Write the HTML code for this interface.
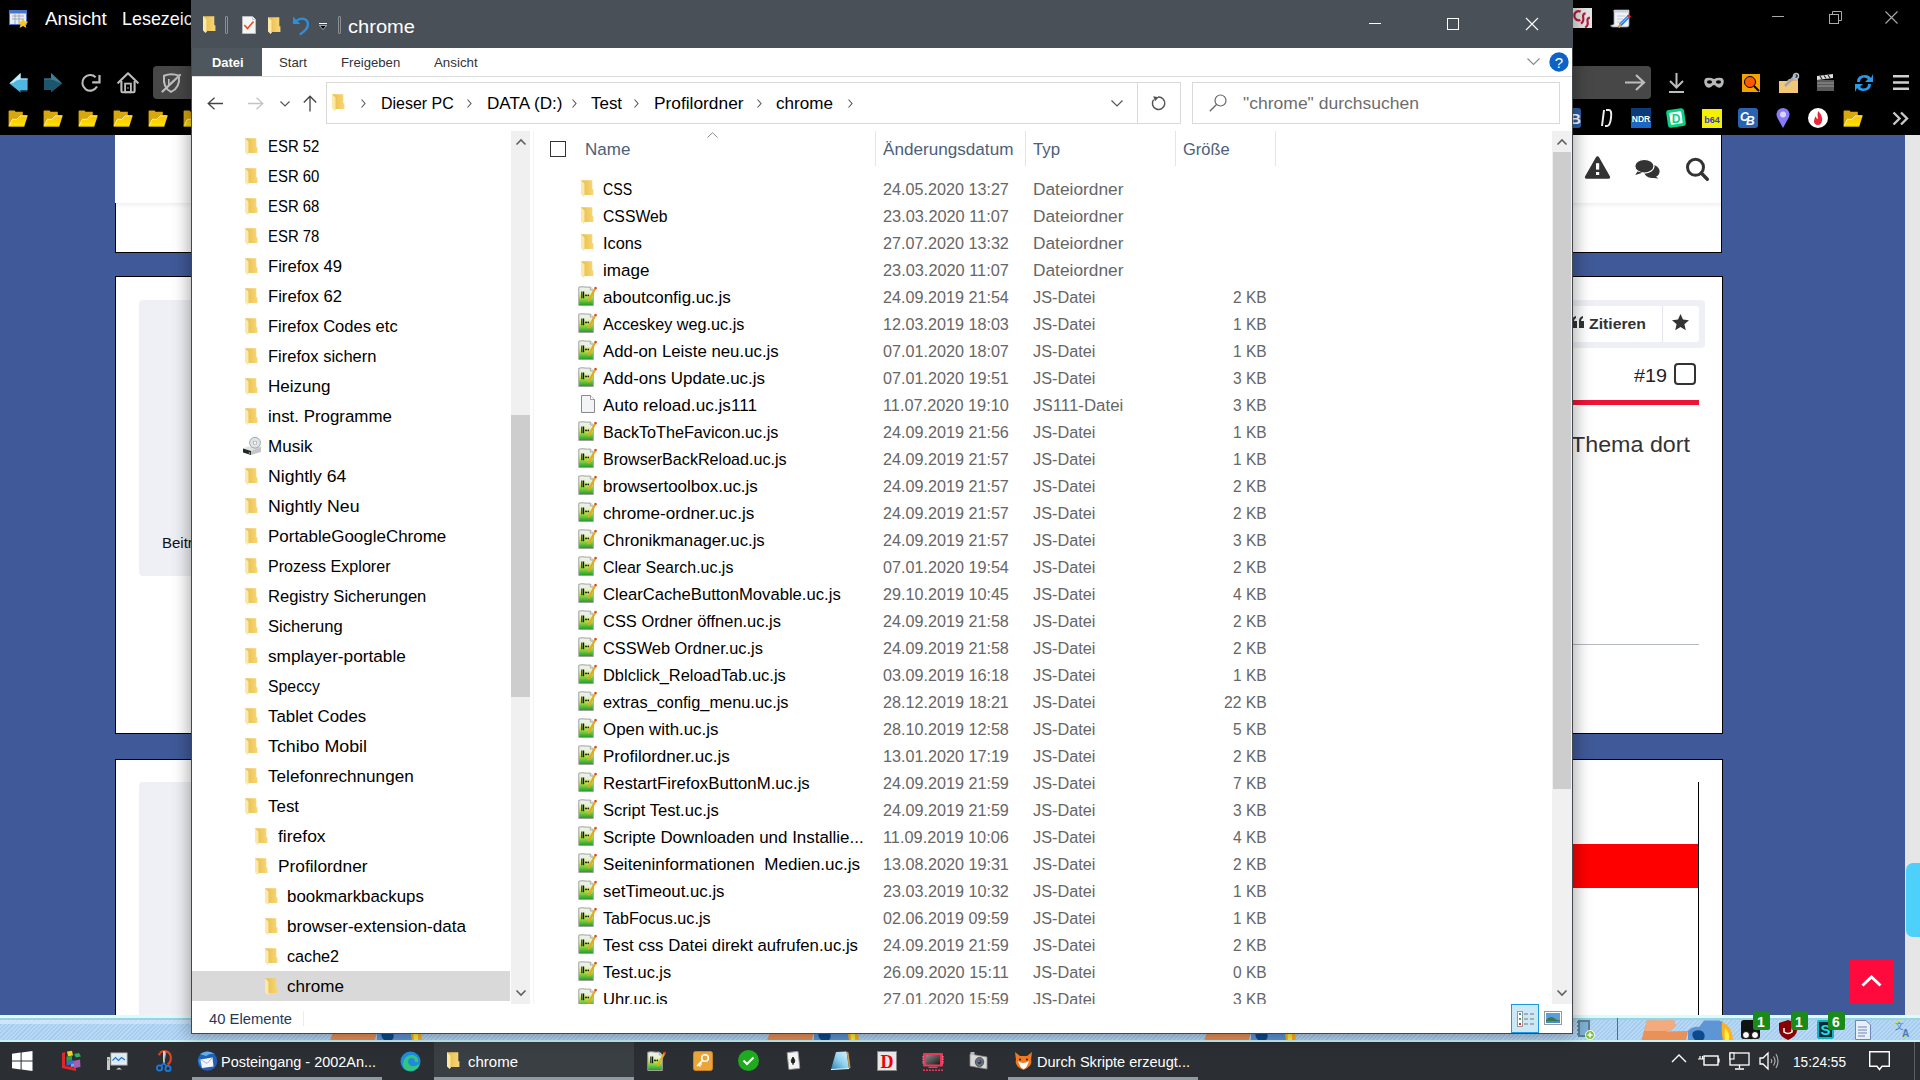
<!DOCTYPE html>
<html><head><meta charset="utf-8">
<style>
*{margin:0;padding:0;box-sizing:border-box}
html,body{width:1920px;height:1080px;overflow:hidden;background:#000;font-family:"Liberation Sans",sans-serif;position:relative}
.a{position:absolute}
.t{position:absolute;white-space:pre}
svg{overflow:visible}
</style></head><body>
<svg width="0" height="0" style="position:absolute">
<defs>
<linearGradient id="gfold" x1="0" y1="0" x2="1" y2="0"><stop offset="0" stop-color="#e9bd4c"/><stop offset="1" stop-color="#f8d775"/></linearGradient>
<linearGradient id="gjs" x1="0" y1="0" x2="0" y2="1"><stop offset="0" stop-color="#eef2f2"/><stop offset=".3" stop-color="#e6f2d0"/><stop offset=".5" stop-color="#c6ea50"/><stop offset=".75" stop-color="#6cc43a"/><stop offset="1" stop-color="#1b9a2a"/></linearGradient>
<linearGradient id="gbmf" x1="0" y1="0" x2="0" y2="1"><stop offset="0" stop-color="#f8c400"/><stop offset=".7" stop-color="#ffd800"/><stop offset="1" stop-color="#fff000"/></linearGradient>
<linearGradient id="gaddon" x1="0" y1="0" x2="0" y2="1"><stop offset="0" stop-color="#c9e2f5"/><stop offset="1" stop-color="#a9cdee"/></linearGradient>
<symbol id="fold" viewBox="0 0 13 17"><path d="M0.5 0.3H11.3V9.3H12.4V15H3.8V14H0.5Z" fill="url(#gfold)"/><path d="M0 0L3.8 3.4V15.2L2.6 17L0 14.6Z" fill="#fde9a6"/><path d="M0 0L3.8 3.4V15.2" fill="none" stroke="#e9c262" stroke-width=".6"/></symbol>
<symbol id="js" viewBox="0 0 19 20"><path d="M.8 1.2Q4 .4 7 1Q9.5 1.4 11.8 1H12.3L15.3 4V19.5H.8Z" fill="url(#gjs)" stroke="#a0a0a0" stroke-width="1"/><path d="M12.3 1V4H15.3" fill="#e8e8e8" stroke="#a0a0a0" stroke-width=".8"/><path d="M3.9 5.5V12.2M5.6 5.5V12.2" stroke="#151515" stroke-width="1.2"/><circle cx="8" cy="9.4" r=".95" fill="#151515"/><circle cx="10.3" cy="9.4" r=".85" fill="#151515"/><path d="M18 1.3L10.3 15.2" stroke="#e8a81c" stroke-width="2.1"/><path d="M18 1.3L17.1 2.9" stroke="#e03b3b" stroke-width="2.3"/></symbol>
<symbol id="blank" viewBox="0 0 14 18"><path d="M.5 .5H9.5L13.5 4.5V17.5H.5Z" fill="#f3f4f6" stroke="#8a8a8a" stroke-width="1"/><path d="M9.5 .5V4.5H13.5" fill="#fff" stroke="#8a8a8a" stroke-width=".8"/></symbol>
<symbol id="bmf" viewBox="0 0 20 17"><path d="M.6 1.2Q.6 .4 1.4 .4H6.5L7.6 1.8H14.8V5.5H11.5L8.8 9H3.8L.6 16.4Z" fill="#d9a60c"/><path d="M.6 16.4L3.8 9H8.8L11.5 5.5H19.8L16.2 16.4Z" fill="url(#gbmf)"/><path d="M1.2 15.6L4.2 9.3H9L11.8 5.8H19.2" fill="none" stroke="#fff8d0" stroke-width=".9"/><path d="M.8 16H16.3" stroke="#e8c000" stroke-width=".8"/></symbol>
<symbol id="chev" viewBox="0 0 10 6"><path d="M.5 .5L5 5L9.5 .5" fill="none" stroke="currentColor" stroke-width="1.2"/></symbol>
</defs></svg>

<div class="a" style="left:0px;top:135px;width:1905px;height:880px;background:#405998;"></div>
<div class="a" style="left:1905px;top:135px;width:15px;height:880px;background:#e6e6e6;"></div>
<div class="a" style="left:1906px;top:863px;width:14px;height:74px;background:#4dd0fa;border-radius:7px 0 0 7px"></div>
<div class="a" style="left:115px;top:134px;width:1607px;height:119px;background:#fff;border:1px solid #000"></div>
<div class="a" style="left:115px;top:276px;width:1608px;height:458px;background:#fff;border:1px solid #000"></div>
<div class="a" style="left:115px;top:759px;width:1608px;height:262px;background:#fff;border:1px solid #000"></div>
<div class="a" style="left:115px;top:135px;width:1606px;height:68px;background:#fff;"></div>
<div class="a" style="left:116px;top:203px;width:1605px;height:5px;background:linear-gradient(#f1f1f3,#fff);"></div>
<div class="a" style="left:139px;top:300px;width:60px;height:276px;background:#eef0f5;border-radius:4px"></div>
<div class="t " style="left:162px;top:535.30px;font-size:15px;line-height:15px;color:#111;">Beitr</div>
<div class="a" style="left:139px;top:782px;width:60px;height:240px;background:#eef0f5;border-radius:4px"></div>
<svg class="a" style="left:1584px;top:155px;" width="27" height="25" viewBox="0 0 27 25"><path d="M13.5 1.3Q14.6 1.3 15.2 2.4L26 21.6Q26.6 23.8 24.4 23.8H2.6Q.4 23.8 1 21.6L11.8 2.4Q12.4 1.3 13.5 1.3Z" fill="#333"/><rect x="12" y="8.2" width="3.2" height="6.4" fill="#fff"/><rect x="12" y="17" width="3.2" height="3" fill="#fff"/></svg>
<svg class="a" style="left:1634px;top:159px;" width="27" height="21" viewBox="0 0 27 21"><ellipse cx="17.8" cy="12.4" rx="7.8" ry="6.6" fill="#333"/><path d="M21 17L24.5 19.5L17 18.8Z" fill="#333"/><ellipse cx="10.4" cy="7.2" rx="9.6" ry="6.9" fill="#333" stroke="#fff" stroke-width="1.3"/><path d="M3.5 12.5L1.2 16L8.5 13.8Z" fill="#333"/></svg>
<svg class="a" style="left:1684px;top:156px;" width="27" height="27" viewBox="0 0 27 27"><circle cx="11.5" cy="11.3" r="8" fill="none" stroke="#333" stroke-width="3"/><path d="M17.2 17L23.3 23.2" stroke="#333" stroke-width="3.4" stroke-linecap="round"/></svg>
<div class="a" style="left:1572px;top:300px;width:133px;height:48px;background:#eef0f5;border-radius:4px"></div>
<div class="a" style="left:1572px;top:306px;width:127px;height:36px;background:#fff;border-radius:0 3px 3px 0"></div>
<div class="a" style="left:1662px;top:306px;width:1px;height:36px;background:#e4e6ec;"></div>
<svg class="a" style="left:1572px;top:316px;" width="13" height="12" viewBox="0 0 13 12"><path d="M0 5Q0 1 4 0V2Q2 3 2 5H5V12H0Z M7 5Q7 1 11 0V2Q9 3 9 5H12V12H7Z" fill="#333"/></svg>
<div class="t f" style="left:1589px;top:316.30px;font-size:15px;line-height:15px;color:#333;transform:scaleX(1.0519);transform-origin:0 0;font-weight:bold;">Zitieren</div>
<svg class="a" style="left:1672px;top:314px;" width="17" height="17" viewBox="0 0 17 17"><path d="M8.5 0L11 5.6L17 6.2L12.4 10.2L13.8 16.3L8.5 13.1L3.2 16.3L4.6 10.2L0 6.2L6 5.6Z" fill="#333"/></svg>
<div class="t f" style="left:1633.5px;top:366.76px;font-size:18px;line-height:18px;color:#222;transform:scaleX(1.0983);transform-origin:0 0;">#19</div>
<div class="a" style="left:1674px;top:363px;width:22px;height:22px;border:2px solid #333;border-radius:4px"></div>
<div class="a" style="left:1572px;top:400px;width:127px;height:5px;background:#ee1438;"></div>
<div class="t f" style="left:1571px;top:433.88px;font-size:22px;line-height:22px;color:#333;transform:scaleX(1.0578);transform-origin:0 0;">Thema dort</div>
<div class="a" style="left:1572px;top:644px;width:127px;height:1px;background:#b4b8c0;"></div>
<div class="a" style="left:1572px;top:844px;width:126px;height:44px;background:#ff0000;"></div>
<div class="a" style="left:1698px;top:782px;width:1px;height:240px;background:#000;"></div>
<div class="a" style="left:1849px;top:959px;width:45px;height:45px;background:#ff0a3c;"></div>
<svg class="a" style="left:1861px;top:975px;" width="21" height="12" viewBox="0 0 21 12"><path d="M1.5 10.5L10.5 2L19.5 10.5" fill="none" stroke="#fff" stroke-width="3"/></svg>
<div class="a" style="left:0px;top:1015px;width:1920px;height:3px;background:#dcfcfc;"></div>
<div class="a" style="left:0px;top:1018px;width:1920px;height:2px;background:#96d3e3;"></div>
<div class="a" style="left:0px;top:1020px;width:1920px;height:20px;background:repeating-linear-gradient(135deg,#a6ccf0 0 1.5px,#bad9f5 1.5px 3px);"></div>
<div class="a" style="left:0px;top:1020px;width:700px;height:4px;background:linear-gradient(90deg,rgba(230,240,255,.6),rgba(230,240,255,0));"></div>
<div class="a" style="left:0px;top:1040px;width:1920px;height:2px;background:#c9f2f5;"></div>
<svg class="a" style="left:330px;top:1020px;" width="94" height="20" viewBox="0 0 94 20"><path d="M6 .5H33L35 5.5L31 9.5L25 11.5L47 11L45 20H.5Z" fill="#ee8a48" opacity=".9"/><path d="M6 .5H33L35 5.5L31 9.5L25 11H3.5Z" fill="#f4ae82" opacity=".9"/><path d="M47 11Q52 6 58 7L63 .5H78L82 2L89 20H47Z" fill="#4f8ad0" opacity=".85"/><path d="M52 12Q56 9 61 11Q66 15 62 20H54Q50 16 52 12Z" fill="#0c4a8c"/><path d="M81 2Q91 6 92 20H82Q80 12 81 2Z" fill="#ffb020"/><path d="M84 8Q89 12 88 20H84Q83 14 84 8Z" fill="#fff040"/></svg>
<svg class="a" style="left:767px;top:1020px;" width="94" height="20" viewBox="0 0 94 20"><path d="M6 .5H33L35 5.5L31 9.5L25 11.5L47 11L45 20H.5Z" fill="#ee8a48" opacity=".9"/><path d="M6 .5H33L35 5.5L31 9.5L25 11H3.5Z" fill="#f4ae82" opacity=".9"/><path d="M47 11Q52 6 58 7L63 .5H78L82 2L89 20H47Z" fill="#4f8ad0" opacity=".85"/><path d="M52 12Q56 9 61 11Q66 15 62 20H54Q50 16 52 12Z" fill="#0c4a8c"/><path d="M81 2Q91 6 92 20H82Q80 12 81 2Z" fill="#ffb020"/><path d="M84 8Q89 12 88 20H84Q83 14 84 8Z" fill="#fff040"/></svg>
<svg class="a" style="left:1204px;top:1020px;" width="94" height="20" viewBox="0 0 94 20"><path d="M6 .5H33L35 5.5L31 9.5L25 11.5L47 11L45 20H.5Z" fill="#ee8a48" opacity=".9"/><path d="M6 .5H33L35 5.5L31 9.5L25 11H3.5Z" fill="#f4ae82" opacity=".9"/><path d="M47 11Q52 6 58 7L63 .5H78L82 2L89 20H47Z" fill="#4f8ad0" opacity=".85"/><path d="M52 12Q56 9 61 11Q66 15 62 20H54Q50 16 52 12Z" fill="#0c4a8c"/><path d="M81 2Q91 6 92 20H82Q80 12 81 2Z" fill="#ffb020"/><path d="M84 8Q89 12 88 20H84Q83 14 84 8Z" fill="#fff040"/></svg>
<svg class="a" style="left:1641px;top:1020px;" width="94" height="20" viewBox="0 0 94 20"><path d="M6 .5H33L35 5.5L31 9.5L25 11.5L47 11L45 20H.5Z" fill="#ee8a48" opacity=".9"/><path d="M6 .5H33L35 5.5L31 9.5L25 11H3.5Z" fill="#f4ae82" opacity=".9"/><path d="M47 11Q52 6 58 7L63 .5H78L82 2L89 20H47Z" fill="#4f8ad0" opacity=".85"/><path d="M52 12Q56 9 61 11Q66 15 62 20H54Q50 16 52 12Z" fill="#0c4a8c"/><path d="M81 2Q91 6 92 20H82Q80 12 81 2Z" fill="#ffb020"/><path d="M84 8Q89 12 88 20H84Q83 14 84 8Z" fill="#fff040"/></svg>
<svg class="a" style="left:1577px;top:1020px;" width="20" height="20" viewBox="0 0 20 20"><rect x="1" y="0" width="12" height="17" fill="#5f7f8f"/><rect x="3" y="2" width="8" height="13" fill="#7fb3d9"/><path d="M1 2H0M1 6H0M1 10H0M1 14H0" stroke="#333"/><circle cx="13" cy="15" r="4.5" fill="#7ac142" stroke="#fff"/><path d="M13 12.5V17.5M10.5 15H15.5" stroke="#fff" stroke-width="1.6"/></svg>
<div class="a" style="left:1617px;top:1018px;width:1px;height:22px;background:#5a6a7a;"></div>
<svg class="a" style="left:1741px;top:1020px;" width="20" height="20" viewBox="0 0 20 20"><rect x="0" y="0" width="19" height="19" rx="3" fill="#111"/><circle cx="5" cy="15" r="3.5" fill="#fff" stroke="#111"/><circle cx="14" cy="15" r="3.5" fill="#fff" stroke="#111"/></svg>
<svg class="a" style="left:1779px;top:1020px;" width="18" height="20" viewBox="0 0 18 20"><path d="M9 0L18 3V10Q18 16 9 20Q0 16 0 10V3Z" fill="#800"/><path d="M5 8V12Q9 15 13 12V8" fill="none" stroke="#fff" stroke-width="1.5"/></svg>
<svg class="a" style="left:1817px;top:1020px;" width="18" height="20" viewBox="0 0 18 20"><rect x="0" y="0" width="17" height="19" rx="2" fill="#10b3c7"/><rect x="2" y="2" width="13" height="15" fill="#0b2b33"/><text x="8.5" y="15" font-family="Liberation Sans" font-weight="bold" font-size="15" fill="#1de0f0" text-anchor="middle">S</text></svg>
<div class="a" style="left:1753px;top:1012px;width:17px;height:18px;background:#1a8a1a;border-radius:2px"></div>
<div class="t " style="left:1757px;top:1015.15px;font-size:14px;line-height:14px;color:#fff;font-weight:bold;">1</div>
<div class="a" style="left:1791px;top:1012px;width:17px;height:18px;background:#1a8a1a;border-radius:2px"></div>
<div class="t " style="left:1795px;top:1015.15px;font-size:14px;line-height:14px;color:#fff;font-weight:bold;">1</div>
<div class="a" style="left:1828px;top:1012px;width:17px;height:18px;background:#1a8a1a;border-radius:2px"></div>
<div class="t " style="left:1832px;top:1015.15px;font-size:14px;line-height:14px;color:#fff;font-weight:bold;">6</div>
<svg class="a" style="left:1855px;top:1020px;" width="16" height="20" viewBox="0 0 16 20"><path d="M.5 .5H11L15.5 5V19.5H.5Z" fill="#e8eef8" stroke="#6c86b8"/><path d="M3 7H12M3 10H12M3 13H12M3 16H10" stroke="#6c86b8"/></svg>
<svg class="a" style="left:1892px;top:1020px;" width="18" height="18" viewBox="0 0 18 18"><path d="M3 6Q3 1 9 1M15 12Q15 17 9 17" fill="none" stroke="#d8e84a" stroke-width="1.6"/><text x="3" y="9" font-size="9" fill="#4a7abd" font-family="Liberation Sans">文</text><text x="10" y="17" font-size="10" fill="#4a7abd" font-family="Liberation Sans" font-weight="bold">A</text></svg>
<div class="a" style="left:0px;top:1042px;width:1920px;height:38px;background:#2b2f33;"></div>
<div class="a" style="left:434px;top:1042px;width:200px;height:38px;background:#3a3f44;"></div>
<div class="a" style="left:192px;top:1077px;width:190px;height:3px;background:#8f9aa3;"></div>
<div class="a" style="left:434px;top:1077px;width:200px;height:3px;background:#8f9aa3;"></div>
<div class="a" style="left:1008px;top:1077px;width:190px;height:3px;background:#8f9aa3;"></div>
<svg class="a" style="left:12px;top:1051px;" width="21" height="20" viewBox="0 0 21 20"><path d="M0 2.8L8.6 1.6V9.5H0ZM9.6 1.5L20.5 0V9.5H9.6ZM0 10.5H8.6V18.4L0 17.2ZM9.6 10.5H20.5V20L9.6 18.5Z" fill="#fff"/></svg>
<svg class="a" style="left:61px;top:1050px;" width="21" height="21" viewBox="0 0 21 21"><path d="M1 3L4 2V16L15 18V21L1 18Z" fill="#e02828"/><path d="M4 16L15 18L17 16.5L5 14.5Z" fill="#b01818"/><path d="M6 1.5L11 .8L12 5.5L7 6.2Z" fill="#f2d020"/><path d="M5.5 6.5L11 5.8V10.5L5.5 11Z" fill="#2ea040"/><path d="M5.5 11L12 10.2L12.5 14.5L5.5 15Z" fill="#3a6ae0"/><path d="M12 11L19 9.5L19.5 17L13 18Z" fill="#a060b0"/><path d="M13 4L18 3L20 6.5L15 7.5Z" fill="#30b060"/><path d="M10 14L13 13.5V16.5L10 17Z" fill="#60b0e0"/></svg>
<svg class="a" style="left:106px;top:1052px;" width="22" height="19" viewBox="0 0 22 19"><rect x="1" y="5" width="3" height="13" fill="#c8c8c8"/><rect x="1.5" y="7" width="1.5" height="1.5" fill="#3c3"/><rect x="5" y="1" width="16" height="12" fill="#f2f4f6" stroke="#b8b8b8"/><rect x="6.5" y="2.5" width="13" height="9" fill="#d6ecf8"/><path d="M6.5 8.5L9.5 5.5L12.5 8.5L15.5 5.5L19 8" fill="none" stroke="#2a6ad0" stroke-width="1.1"/><path d="M13 13V15.5L10 17.5H16L13 15.5" fill="#d0d0d0"/></svg>
<svg class="a" style="left:155px;top:1050px;" width="18" height="22" viewBox="0 0 18 22"><path d="M5 2.5Q9 0 13 2Q17 5 15.5 11Q14.5 13.5 12.5 14.5" fill="none" stroke="#e0401c" stroke-width="2.2"/><path d="M2.5 4L6.5 1.5L5 6Z" fill="#e0401c"/><path d="M8 1L10 1V13L9 15L8 13Z" fill="#d0d0d0"/><path d="M9 12L11 1.5" stroke="#aaa" stroke-width="1"/><circle cx="4.5" cy="18" r="2.6" fill="none" stroke="#1a7ae0" stroke-width="1.8"/><circle cx="13" cy="18.5" r="2.6" fill="none" stroke="#1a7ae0" stroke-width="1.8"/><path d="M6 16L9 13L11.5 16.5" stroke="#1a7ae0" stroke-width="1.5" fill="none"/></svg>
<svg class="a" style="left:196px;top:1050px;" width="22" height="22" viewBox="0 0 22 22"><circle cx="11.5" cy="11" r="9.8" fill="#1f5fb8"/><path d="M4 4Q11 -1 19 4Q14 3 10 6Z" fill="#5fb0f0"/><path d="M2.5 8Q2 15 8 19L6 12Z" fill="#3a90e0"/><path d="M4.5 9.5L16.5 7.5L17.5 16.5L6 18Z" fill="#f4f6fa"/><path d="M4.5 9.5L11 13.5L16.5 7.5" fill="none" stroke="#9ab0c8" stroke-width=".9"/></svg>
<div class="t f" style="left:221px;top:1055.40px;font-size:14.88px;line-height:14.88px;color:#fff;transform:scaleX(0.9711);transform-origin:0 0;">Posteingang - 2002An...</div>
<svg class="a" style="left:400px;top:1051px;" width="21" height="21" viewBox="0 0 21 21"><circle cx="10.5" cy="10.5" r="10" fill="#1d8ddb"/><path d="M3 12Q5 3 13 4Q19 6 18 11H8Q9 16 15 15Q19 14 20 12Q18 20 10 20Q2 19 3 12Z" fill="#33c481"/><path d="M8 11Q8 7 12 7Q15 7 15 11Z" fill="#1d8ddb"/></svg>
<svg class="a" style="left:447px;top:1052px;" width="13" height="17"><use href="#fold"/></svg>
<div class="t f" style="left:468px;top:1055.40px;font-size:14.88px;line-height:14.88px;color:#fff;transform:scaleX(1.0079);transform-origin:0 0;">chrome</div>
<svg class="a" style="left:647px;top:1051px;" width="19" height="20"><use href="#js"/></svg>
<svg class="a" style="left:693px;top:1051px;" width="20" height="20" viewBox="0 0 20 20"><rect x=".5" y=".5" width="19" height="19" rx="2" fill="#e9a53a" stroke="#c8822a"/><circle cx="12" cy="7" r="3.3" fill="none" stroke="#fff" stroke-width="1.6"/><path d="M9.8 9.2L4 15M5.5 13.5L7.5 15.5M7 12L8.6 13.6" stroke="#fff" stroke-width="1.6"/></svg>
<svg class="a" style="left:738px;top:1050px;" width="21" height="21" viewBox="0 0 21 21"><circle cx="10.5" cy="10.5" r="10.5" fill="#1faa1f"/><path d="M5.5 10.5L9 14L15.5 7.5" fill="none" stroke="#fff" stroke-width="2"/></svg>
<svg class="a" style="left:786px;top:1051px;" width="15" height="20" viewBox="0 0 15 20"><rect x="2" y="1" width="11" height="17" rx="1" fill="#f4f4f4" stroke="#999" transform="rotate(-6 7 10)"/><path d="M7 6Q4 10 6 12H8Q10 10 7 6Z M7 11V14" stroke="#222" fill="#222"/></svg>
<svg class="a" style="left:830px;top:1051px;" width="21" height="20" viewBox="0 0 21 20"><defs><linearGradient id="gnp" x1="0" y1="1" x2="1" y2="0"><stop offset="0" stop-color="#2f7fae"/><stop offset=".5" stop-color="#8fd0ee"/><stop offset="1" stop-color="#e2f6fc"/></linearGradient></defs><path d="M6 1L16.5 .5L19 17.5L1 18.5Z" fill="url(#gnp)"/><path d="M16.5 .5L18.5 1.5L20.5 17L19 17.5Z" fill="#c09a58"/><path d="M1 18.5L19 17.5" stroke="#dff" stroke-width="1"/></svg>
<svg class="a" style="left:877px;top:1051px;" width="20" height="20" viewBox="0 0 20 20"><rect x=".5" y=".5" width="19" height="19" fill="#e8e8e8" stroke="#888"/><text x="10" y="17" text-anchor="middle" font-family="Liberation Serif" font-weight="bold" font-size="18" fill="#e00">D</text></svg>
<svg class="a" style="left:922px;top:1052px;" width="22" height="20" viewBox="0 0 22 20"><defs><linearGradient id="gmon" x1="0" y1="0" x2="1" y2="1"><stop offset="0" stop-color="#8a8a8a"/><stop offset="1" stop-color="#1a1a1a"/></linearGradient></defs><rect x="1" y="1" width="20" height="13.5" rx="1" fill="#e8385c"/><rect x="4" y="3" width="14" height="9.5" fill="url(#gmon)"/><path d="M1 4V12M21 4V12" stroke="#ff8aa0" stroke-width="1" stroke-dasharray="1.5 1"/><path d="M7 14.5H15L16 16H6Z" fill="#e8385c"/><path d="M1 18.2H21" stroke="#e8385c" stroke-width="1.6" stroke-dasharray="2 1"/></svg>
<svg class="a" style="left:969px;top:1051px;" width="20" height="20" viewBox="0 0 20 20"><path d="M1 3L18 6V18L1 15Z" fill="#d8d8d8" stroke="#8a8a8a" stroke-width=".8"/><rect x="1.5" y="1" width="4" height="3" fill="#bbb"/><ellipse cx="10.5" cy="11" rx="4.2" ry="4.6" fill="#6a7078" stroke="#444" stroke-width=".8"/><circle cx="10.5" cy="11" r="2" fill="#2a3a5a"/><circle cx="10" cy="10.3" r=".7" fill="#9cf"/></svg>
<svg class="a" style="left:1013px;top:1050px;" width="21" height="21" viewBox="0 0 21 21"><path d="M2 2L7 6H14L19 2L18 10Q20 16 10.5 20Q1 16 3 10Z" fill="#f07820"/><path d="M5 11Q10 15 16 11Q14 18 10.5 19Q7 18 5 11Z" fill="#fff"/><circle cx="7" cy="9.5" r="1" fill="#222"/><circle cx="14" cy="9.5" r="1" fill="#222"/></svg>
<div class="t f" style="left:1037px;top:1055.40px;font-size:14.88px;line-height:14.88px;color:#fff;transform:scaleX(0.9791);transform-origin:0 0;">Durch Skripte erzeugt...</div>
<svg class="a" style="left:1671px;top:1054px;" width="16" height="9" viewBox="0 0 16 9"><path d="M1 8L8 1L15 8" fill="none" stroke="#fff" stroke-width="1.4"/></svg>
<svg class="a" style="left:1698px;top:1053px;" width="22" height="14" viewBox="0 0 22 14"><rect x="6" y="3" width="14" height="9" fill="none" stroke="#fff" stroke-width="1.4"/><rect x="20" y="5.5" width="1.6" height="4" fill="#fff"/><path d="M0 6H6M2 3V6M4.5 3V6" stroke="#fff" stroke-width="1.2"/></svg>
<svg class="a" style="left:1729px;top:1052px;" width="21" height="18" viewBox="0 0 21 18"><rect x="1" y="1" width="19" height="12" fill="none" stroke="#fff" stroke-width="1.3"/><path d="M10.5 13V16M6 17H15" stroke="#fff" stroke-width="1.3"/><rect x="1" y="1" width="4" height="6" fill="#2b2f33" stroke="#fff" stroke-width="1.1"/></svg>
<svg class="a" style="left:1759px;top:1052px;" width="20" height="18" viewBox="0 0 20 18"><path d="M1 6H4L9 1V17L4 12H1Z" fill="none" stroke="#fff" stroke-width="1.3"/><path d="M12 7Q13.5 9 12 11M14.5 4.5Q17.5 9 14.5 13.5M17 2Q21 9 17 16" fill="none" stroke="#aaa" stroke-width="1.2"/></svg>
<div class="t f" style="left:1793px;top:1054.90px;font-size:14.88px;line-height:14.88px;color:#fff;transform:scaleX(0.9153);transform-origin:0 0;">15:24:55</div>
<svg class="a" style="left:1869px;top:1051px;" width="21" height="20" viewBox="0 0 21 20"><path d="M.7 .7H20.3V15.3H13L10.5 18.5L8 15.3H.7Z" fill="none" stroke="#fff" stroke-width="1.4"/></svg>
<div class="a" style="left:1914px;top:1042px;width:1px;height:38px;background:#5a5f64;"></div>
<svg class="a" style="left:9px;top:10px;" width="20" height="18" viewBox="0 0 20 18"><rect x=".5" y=".5" width="17" height="14" fill="#e8eef8" stroke="#4a72c8"/><rect x=".5" y=".5" width="17" height="3" fill="#4a72c8"/><path d="M3 6H15M3 9H15M6 4V14M10 4V14" stroke="#9ab"/><path d="M14 8L15.6 11.5L19.4 11.8L16.5 14.2L17.4 18L14 16L10.6 18L11.5 14.2L8.6 11.8L12.4 11.5Z" fill="#f6c62c"/></svg>
<div class="t f" style="left:45px;top:9.56px;font-size:18.24px;line-height:18.24px;color:#fff;transform:scaleX(1.0344);transform-origin:0 0;">Ansicht</div>
<div class="t f" style="left:122px;top:9.56px;font-size:18.24px;line-height:18.24px;color:#fff;transform:scaleX(0.9827);transform-origin:0 0;">Lesezeichen</div>
<svg class="a" style="left:9px;top:73px;" width="20" height="20" viewBox="0 0 20 20"><path d="M11.6 0L.4 10.5L11.6 19.6V17H18.6V5.4H11.6Z" fill="#4fb6e2"/><path d="M11.6 0L.4 10.5L4 10Q8 6 11.6 6.5H18.6V5.4H11.6Z" fill="#c4eefc"/><path d="M11.6 17V19.6L12.5 18.6H18.6V17Z" fill="#234a5a"/></svg>
<svg class="a" style="left:44px;top:73px;" width="19" height="20" viewBox="0 0 19 20"><path d="M7 0L18.2 10.5L7 19.6V17H0V5.4H7Z" fill="#1b566c"/><path d="M7 0L18.2 10.5L14 9Q10 6.5 7 6.5H0V5.4H7Z" fill="#3f7f94"/></svg>
<svg class="a" style="left:81px;top:74px;" width="20" height="19" viewBox="0 0 20 19"><path d="M16 12.6A7.8 7.8 0 1 1 14.6 3.2" fill="none" stroke="#bdbdbd" stroke-width="2.1"/><path d="M11.2 8.4H18.5V1" fill="none" stroke="#bdbdbd" stroke-width="2.2"/></svg>
<svg class="a" style="left:117px;top:72px;" width="22" height="22" viewBox="0 0 22 22"><path d="M1.2 10.8L11 1.3L20.8 10.8" fill="none" stroke="#bdbdbd" stroke-width="2.1" stroke-linejoin="round" stroke-linecap="round"/><path d="M4.4 9V19Q4.4 20.2 5.6 20.2H16.4Q17.6 20.2 17.6 19V9" fill="none" stroke="#bdbdbd" stroke-width="2.1"/><rect x="8.1" y="11.6" width="5.8" height="8.6" fill="none" stroke="#bdbdbd" stroke-width="1.8"/><circle cx="11" cy="16" r=".8" fill="#bdbdbd"/></svg>
<div class="a" style="left:153px;top:66px;width:60px;height:33px;background:#474747;border-radius:4px"></div>
<svg class="a" style="left:161px;top:73px;" width="21" height="21" viewBox="0 0 21 21"><path d="M3 2.8Q10.5 -.2 18 2.8Q19.2 15 10 18.8Q1.8 15 3 2.8Z" fill="none" stroke="#bdbdbd" stroke-width="2"/><path d="M7.8 6V12.5L12.5 7.8" fill="none" stroke="#bdbdbd" stroke-width="1.6"/><path d="M1.5 18.5L19 2" stroke="#bdbdbd" stroke-width="2.3" stroke-linecap="round"/></svg>
<svg class="a" style="left:8px;top:110px;" width="20" height="17"><use href="#bmf"/></svg>
<svg class="a" style="left:43px;top:110px;" width="20" height="17"><use href="#bmf"/></svg>
<svg class="a" style="left:78px;top:110px;" width="20" height="17"><use href="#bmf"/></svg>
<svg class="a" style="left:113px;top:110px;" width="20" height="17"><use href="#bmf"/></svg>
<svg class="a" style="left:148px;top:110px;" width="20" height="17"><use href="#bmf"/></svg>
<svg class="a" style="left:183px;top:110px;" width="20" height="17"><use href="#bmf"/></svg>
<svg class="a" style="left:1573px;top:8px;" width="19" height="20" viewBox="0 0 19 20"><rect x="0" y="0" width="19" height="20" fill="#e6e6e6"/><path d="M7.6 3.6A4.4 4.6 0 1 0 7.4 12" fill="none" stroke="#b51d3c" stroke-width="2.3"/><path d="M12.6 5.4Q9.4 5.8 10.2 9.6Q11 13.6 8 15.6" fill="none" stroke="#b51d3c" stroke-width="2.2"/><path d="M16.9 9.6Q13.8 10 14.6 13.8Q15.4 17.6 12.2 19.6" fill="none" stroke="#b51d3c" stroke-width="2.2"/></svg>
<svg class="a" style="left:1610px;top:8px;" width="20" height="20" viewBox="0 0 20 20"><path d="M4 2H19V17Q19 19 17 19H3Q1 19 .6 17.6L4 16.5Z" fill="#eef1f5" stroke="#8d98a6" stroke-width=".8"/><path d="M4 2Q2.8 3.6 4.6 4.6H19V2Z" fill="#c9d1da"/><path d="M7 8H15M7 11H13M7 14H12" stroke="#c2cad2"/><path d="M19 8.2L10.2 17" stroke="#2a7ae0" stroke-width="3.2"/><path d="M18.3 8.6L10.2 16.6" stroke="#9cd4ff" stroke-width=".9"/><path d="M19.8 7.4L18.2 9" stroke="#e83030" stroke-width="3.4"/><path d="M10.6 16.6L8.6 19.2" stroke="#d4a23c" stroke-width="2.4"/></svg>
<div class="a" style="left:1772px;top:16px;width:12px;height:1px;background:#aaa;"></div>
<svg class="a" style="left:1829px;top:11px;" width="13" height="13" viewBox="0 0 13 13"><rect x=".5" y="3.5" width="9" height="9" fill="none" stroke="#aaa"/><path d="M3.5 3.5V.5H12.5V9.5H9.5" fill="none" stroke="#aaa"/></svg>
<svg class="a" style="left:1885px;top:11px;" width="13" height="13" viewBox="0 0 13 13"><path d="M.5 .5L12.5 12.5M12.5 .5L.5 12.5" stroke="#aaa" stroke-width="1.1"/></svg>
<div class="a" style="left:1560px;top:66px;width:91px;height:33px;background:#474747;border-radius:4px"></div>
<svg class="a" style="left:1625px;top:74px;" width="21" height="17" viewBox="0 0 21 17"><path d="M0 8.5H19M11 1L19 8.5L11 16" fill="none" stroke="#bdbdbd" stroke-width="2.2"/></svg>
<svg class="a" style="left:1668px;top:73px;" width="17" height="20" viewBox="0 0 17 20"><path d="M8.5 0V14M2 8L8.5 14.5L15 8" fill="none" stroke="#bdbdbd" stroke-width="2"/><path d="M1 19H16" stroke="#bdbdbd" stroke-width="2"/></svg>
<svg class="a" style="left:1704px;top:77px;" width="20" height="12" viewBox="0 0 20 12"><path d="M10 2Q14 0 18 1Q21 3 19 8Q17 12 13 10Q11 8 10 8Q9 8 7 10Q3 12 1 8Q-1 3 2 1Q6 0 10 2Z" fill="#b8b8b8"/><ellipse cx="5.5" cy="5" rx="2.6" ry="1.8" fill="#000"/><ellipse cx="14.5" cy="5" rx="2.6" ry="1.8" fill="#000"/></svg>
<svg class="a" style="left:1742px;top:74px;" width="18" height="18" viewBox="0 0 18 18"><rect x="0" y="0" width="18" height="18" fill="#f5a300"/><circle cx="8" cy="8" r="5.5" fill="#ff5a00" stroke="#000" stroke-width="1"/><path d="M12 12L17 17" stroke="#000" stroke-width="2"/></svg>
<svg class="a" style="left:1779px;top:73px;" width="20" height="20" viewBox="0 0 20 20"><rect x="0" y="8" width="19" height="12" fill="#f0c878"/><path d="M0 8H8L10 6H19V8" fill="#e0b060"/><path d="M6 13L17 2" stroke="#9aa8b8" stroke-width="2.5"/><circle cx="17" cy="3" r="2.5" fill="none" stroke="#b8c4d0" stroke-width="1.5"/></svg>
<svg class="a" style="left:1816px;top:74px;" width="19" height="17" viewBox="0 0 19 17"><rect x="1" y="6" width="17" height="11" fill="#5a5a5a"/><path d="M1 2L17 0V4L1 6Z" fill="#ddd"/><path d="M4 2L6 5M8 1.5L10 4.5M12 1L14 4" stroke="#333" stroke-width="1.3"/><path d="M1 9H18M1 12H18" stroke="#999"/></svg>
<svg class="a" style="left:1854px;top:73px;" width="20" height="20" viewBox="0 0 20 20"><path d="M3 9Q3 2 11 2Q15 2 17 5L19 1V9H11L14 6Q12 4.5 10 4.5Q6 5 6 9Z" fill="#2a9ae8"/><path d="M17 11Q17 18 9 18Q5 18 3 15L1 19V11H9L6 14Q8 15.5 10 15.5Q14 15 14 11Z" fill="#2a9ae8"/></svg>
<svg class="a" style="left:1893px;top:75px;" width="16" height="15" viewBox="0 0 16 15"><path d="M0 1.3H16M0 7.5H16M0 13.7H16" stroke="#d0d0d0" stroke-width="2.4"/></svg>
<svg class="a" style="left:1572px;top:108px;" width="10" height="20" viewBox="0 0 10 20"><rect x="-8" y="0" width="17" height="20" rx="3" fill="#2b5fa8"/><text x="-2" y="16" font-family="Liberation Sans" font-weight="bold" font-size="15" fill="#fff">B</text></svg>
<svg class="a" style="left:1601px;top:109px;" width="11" height="18" viewBox="0 0 11 18"><path d="M3 1L1 17M5 1H8Q11 1 10 9Q9 17 6 17H4" fill="none" stroke="#eee" stroke-width="2"/></svg>
<svg class="a" style="left:1631px;top:108px;" width="20" height="20" viewBox="0 0 20 20"><rect width="20" height="20" fill="#0c3b7c"/><rect y="13" width="20" height="7" fill="#1c66c4"/><text x="10" y="13.5" text-anchor="middle" font-family="Liberation Sans" font-weight="bold" font-size="8.5" fill="#fff">NDR</text></svg>
<svg class="a" style="left:1666px;top:108px;" width="20" height="20" viewBox="0 0 20 20"><rect x="1" y="1" width="18" height="18" rx="3" fill="#0bd184" transform="rotate(-8 10 10)"/><rect x="4" y="4" width="12" height="12" rx="1" fill="#fff" transform="rotate(-8 10 10)"/><text x="10" y="15" text-anchor="middle" font-family="Liberation Sans" font-weight="bold" font-size="12" fill="#0bd184">D</text></svg>
<svg class="a" style="left:1702px;top:109px;" width="20" height="19" viewBox="0 0 20 19"><rect width="20" height="19" fill="#f4f000"/><text x="10" y="13.5" text-anchor="middle" font-family="Liberation Sans" font-weight="bold" font-size="9" fill="#3a3ad0">b64</text></svg>
<svg class="a" style="left:1738px;top:108px;" width="20" height="20" viewBox="0 0 20 20"><rect width="20" height="20" rx="3" fill="#2a62b0"/><text x="2" y="13" font-family="Liberation Sans" font-weight="bold" font-style="italic" font-size="12" fill="#fff">C</text><text x="8" y="17" font-family="Liberation Sans" font-weight="bold" font-style="italic" font-size="12" fill="#fff">B</text></svg>
<svg class="a" style="left:1776px;top:108px;" width="14" height="20" viewBox="0 0 14 20"><path d="M7 20L1.5 10A6.5 6.5 0 1 1 12.5 10Z" fill="#8a7aff"/><circle cx="7" cy="6.5" r="3" fill="#dcd6ff"/></svg>
<svg class="a" style="left:1808px;top:108px;" width="20" height="20" viewBox="0 0 20 20"><circle cx="10" cy="10" r="10" fill="#fff"/><path d="M10 3Q15 8 14 13Q13 17 10 17Q6 17 6 13Q6 10 8 8Q8 11 10 11Q9 7 10 3Z" fill="#e8283a"/></svg>
<svg class="a" style="left:1843px;top:110px;" width="20" height="17"><use href="#bmf"/></svg>
<svg class="a" style="left:1892px;top:111px;" width="17" height="15" viewBox="0 0 17 15"><path d="M1.5 1.5L7.5 7.5L1.5 13.5M9 1.5L15 7.5L9 13.5" fill="none" stroke="#c8c8c8" stroke-width="2.4"/></svg>
<div class="a" style="left:191px;top:0;width:1382px;height:1034px;background:#fff;border:1px solid #42484e;box-shadow:0 0 16px 2px rgba(0,0,0,.35)"></div>
<div class="a" style="left:191px;top:0px;width:1382px;height:48px;background:#4a5057;"></div>
<svg class="a" style="left:203px;top:16px;" width="13" height="17"><use href="#fold"/></svg>
<div class="a" style="left:225px;top:16px;width:3px;height:18px;border:1px solid #8a8f95;border-radius:1px"></div>
<svg class="a" style="left:242px;top:16px;" width="14" height="18" viewBox="0 0 14 18"><path d="M.5 .5H10.5L13.5 3.5V17.5H.5Z" fill="#f4f5f7" stroke="#b8bcc0"/><path d="M10.5 .5V3.5H13.5" fill="#fff" stroke="#b8bcc0" stroke-width=".8"/><path d="M2.3 9L5.5 12.5L11.5 5.5" fill="none" stroke="#f04a10" stroke-width="1.6"/></svg>
<svg class="a" style="left:268px;top:17px;" width="13" height="17"><use href="#fold"/></svg>
<svg class="a" style="left:293px;top:16px;" width="16" height="19" viewBox="0 0 16 19"><path d="M0 .6V7.9H7.4Z" fill="#2d8fdc"/><path d="M2.8 5.3Q7.5 1.2 12 3.2Q16 5.5 14.6 10.5Q13.2 14.5 6.8 18.4" fill="none" stroke="#2d8fdc" stroke-width="2.3"/></svg>
<svg class="a" style="left:319px;top:23px;" width="8" height="8" viewBox="0 0 8 8"><path d="M0 .5H8" stroke="#fff" stroke-width="1"/><path d="M.5 2.5H7.5L4 6.5Z" fill="#000" stroke="#fff" stroke-width=".6"/></svg>
<div class="a" style="left:338px;top:16px;width:3px;height:18px;border:1px solid #8a8f95;border-radius:1px"></div>
<div class="t f" style="left:348px;top:16.75px;font-size:19.2px;line-height:19.2px;color:#fff;transform:scaleX(1.0459);transform-origin:0 0;">chrome</div>
<div class="a" style="left:1369px;top:23px;width:12px;height:1px;background:#fff;"></div>
<div class="a" style="left:1447px;top:18px;width:12px;height:12px;border:1px solid #fff"></div>
<svg class="a" style="left:1526px;top:18px;" width="12" height="12" viewBox="0 0 12 12"><path d="M0 0L12 12M12 0L0 12" stroke="#fff" stroke-width="1.1"/></svg>
<div class="a" style="left:192px;top:48px;width:70px;height:28px;background:#4d575d;"></div>
<div class="t f" style="left:212px;top:56.61px;font-size:12.86px;line-height:12.86px;color:#fff;transform:scaleX(1.0045);transform-origin:0 0;font-weight:bold;">Datei</div>
<div class="t f" style="left:279px;top:56.61px;font-size:12.86px;line-height:12.86px;color:#333;transform:scaleX(1.0292);transform-origin:0 0;">Start</div>
<div class="t f" style="left:341px;top:56.61px;font-size:12.86px;line-height:12.86px;color:#333;transform:scaleX(1.0225);transform-origin:0 0;">Freigeben</div>
<div class="t f" style="left:434px;top:56.61px;font-size:12.86px;line-height:12.86px;color:#333;transform:scaleX(1.0344);transform-origin:0 0;">Ansicht</div>
<svg class="a" style="left:1527px;top:58px;" width="13" height="8" viewBox="0 0 13 8"><path d="M.5 .5L6.5 6.5L12.5 .5" fill="none" stroke="#888" stroke-width="1.1"/></svg>
<svg class="a" style="left:1549px;top:52px;" width="20" height="20" viewBox="0 0 20 20"><circle cx="10" cy="10" r="9.7" fill="#0d62c6"/><text x="10" y="16" text-anchor="middle" font-family="Liberation Sans" font-size="15" fill="#fff">?</text></svg>
<div class="a" style="left:192px;top:76px;width:1380px;height:1px;background:#dadbdc;"></div>
<svg class="a" style="left:207px;top:97px;" width="17" height="13" viewBox="0 0 17 13"><path d="M16 6.5H1.5M7.5 .7L1.2 6.5L7.5 12.3" fill="none" stroke="#444" stroke-width="1.3"/></svg>
<svg class="a" style="left:247px;top:97px;" width="17" height="13" viewBox="0 0 17 13"><path d="M1 6.5H15.5M9.5 .7L15.8 6.5L9.5 12.3" fill="none" stroke="#c4c4c4" stroke-width="1.3"/></svg>
<svg class="a" style="left:280px;top:101px;" width="10" height="6" viewBox="0 0 10 6"><path d="M.5 .5L5 5L9.5 .5" fill="none" stroke="#555" stroke-width="1.2"/></svg>
<svg class="a" style="left:303px;top:95px;" width="14" height="17" viewBox="0 0 14 17"><path d="M7 16.5V1.5M.8 7.5L7 1.2L13.2 7.5" fill="none" stroke="#444" stroke-width="1.3"/></svg>
<div class="a" style="left:326px;top:82px;width:855px;height:42px;border:1px solid #d9d9d9"></div>
<div class="a" style="left:1137px;top:83px;width:1px;height:40px;background:#d9d9d9;"></div>
<svg class="a" style="left:332px;top:94px;" width="13" height="17"><use href="#fold"/></svg>
<svg class="a" style="left:361px;top:99px;" width="5" height="9" viewBox="0 0 5 9"><path d="M.5 .5L4 4.5L.5 8.5" fill="none" stroke="#555" stroke-width="1.1"/></svg>
<svg class="a" style="left:467px;top:99px;" width="5" height="9" viewBox="0 0 5 9"><path d="M.5 .5L4 4.5L.5 8.5" fill="none" stroke="#555" stroke-width="1.1"/></svg>
<svg class="a" style="left:572px;top:99px;" width="5" height="9" viewBox="0 0 5 9"><path d="M.5 .5L4 4.5L.5 8.5" fill="none" stroke="#555" stroke-width="1.1"/></svg>
<svg class="a" style="left:634px;top:99px;" width="5" height="9" viewBox="0 0 5 9"><path d="M.5 .5L4 4.5L.5 8.5" fill="none" stroke="#555" stroke-width="1.1"/></svg>
<svg class="a" style="left:757px;top:99px;" width="5" height="9" viewBox="0 0 5 9"><path d="M.5 .5L4 4.5L.5 8.5" fill="none" stroke="#555" stroke-width="1.1"/></svg>
<svg class="a" style="left:848px;top:99px;" width="5" height="9" viewBox="0 0 5 9"><path d="M.5 .5L4 4.5L.5 8.5" fill="none" stroke="#555" stroke-width="1.1"/></svg>
<div class="t f" style="left:381px;top:95.19px;font-size:16.32px;line-height:16.32px;color:#000;transform:scaleX(0.9775);transform-origin:0 0;">Dieser PC</div>
<div class="t f" style="left:487px;top:95.19px;font-size:16.32px;line-height:16.32px;color:#000;transform:scaleX(1.0495);transform-origin:0 0;">DATA (D:)</div>
<div class="t f" style="left:591px;top:95.19px;font-size:16.32px;line-height:16.32px;color:#000;transform:scaleX(1.0378);transform-origin:0 0;">Test</div>
<div class="t f" style="left:654px;top:95.19px;font-size:16.32px;line-height:16.32px;color:#000;transform:scaleX(1.0619);transform-origin:0 0;">Profilordner</div>
<div class="t f" style="left:776px;top:95.19px;font-size:16.32px;line-height:16.32px;color:#000;transform:scaleX(1.0456);transform-origin:0 0;">chrome</div>
<svg class="a" style="left:1111px;top:100px;" width="12" height="7" viewBox="0 0 12 7"><path d="M.5 .5L6 6L11.5 .5" fill="none" stroke="#555" stroke-width="1.2"/></svg>
<svg class="a" style="left:1151px;top:95px;" width="16" height="16" viewBox="0 0 16 16"><path d="M7 2.1A6.2 6.2 0 1 1 2.6 4.6" fill="none" stroke="#555" stroke-width="1.5"/><path d="M2.2 1.2L7.8 2.2L4 6.3Z" fill="#555"/></svg>
<div class="a" style="left:1192px;top:82px;width:368px;height:42px;border:1px solid #d9d9d9"></div>
<svg class="a" style="left:1209px;top:94px;" width="18" height="18" viewBox="0 0 18 18"><circle cx="11.5" cy="6.5" r="5.5" fill="none" stroke="#666" stroke-width="1.2"/><path d="M7.5 10.5L.8 17.2" stroke="#666" stroke-width="1.3"/></svg>
<div class="t f" style="left:1243px;top:95.19px;font-size:16.32px;line-height:16.32px;color:#6d6d6d;transform:scaleX(1.0737);transform-origin:0 0;">&quot;chrome&quot; durchsuchen</div>
<div class="a" style="left:192px;top:971px;width:318px;height:30px;background:#d9d9d9;"></div>
<svg class="a" style="left:245px;top:138px;" width="13" height="17"><use href="#fold"/></svg>
<div class="t f" style="left:268px;top:138.19px;font-size:16.32px;line-height:16.32px;color:#000;transform:scaleX(0.9144);transform-origin:0 0;">ESR 52</div>
<svg class="a" style="left:245px;top:168px;" width="13" height="17"><use href="#fold"/></svg>
<div class="t f" style="left:268px;top:168.19px;font-size:16.32px;line-height:16.32px;color:#000;transform:scaleX(0.9144);transform-origin:0 0;">ESR 60</div>
<svg class="a" style="left:245px;top:198px;" width="13" height="17"><use href="#fold"/></svg>
<div class="t f" style="left:268px;top:198.19px;font-size:16.32px;line-height:16.32px;color:#000;transform:scaleX(0.9144);transform-origin:0 0;">ESR 68</div>
<svg class="a" style="left:245px;top:228px;" width="13" height="17"><use href="#fold"/></svg>
<div class="t f" style="left:268px;top:228.19px;font-size:16.32px;line-height:16.32px;color:#000;transform:scaleX(0.9144);transform-origin:0 0;">ESR 78</div>
<svg class="a" style="left:245px;top:258px;" width="13" height="17"><use href="#fold"/></svg>
<div class="t f" style="left:268px;top:258.19px;font-size:16.32px;line-height:16.32px;color:#000;transform:scaleX(1.0202);transform-origin:0 0;">Firefox 49</div>
<svg class="a" style="left:245px;top:288px;" width="13" height="17"><use href="#fold"/></svg>
<div class="t f" style="left:268px;top:288.19px;font-size:16.32px;line-height:16.32px;color:#000;transform:scaleX(1.0202);transform-origin:0 0;">Firefox 62</div>
<svg class="a" style="left:245px;top:318px;" width="13" height="17"><use href="#fold"/></svg>
<div class="t f" style="left:268px;top:318.19px;font-size:16.32px;line-height:16.32px;color:#000;transform:scaleX(1.0143);transform-origin:0 0;">Firefox Codes etc</div>
<svg class="a" style="left:245px;top:348px;" width="13" height="17"><use href="#fold"/></svg>
<div class="t f" style="left:268px;top:348.19px;font-size:16.32px;line-height:16.32px;color:#000;transform:scaleX(1.0142);transform-origin:0 0;">Firefox sichern</div>
<svg class="a" style="left:245px;top:378px;" width="13" height="17"><use href="#fold"/></svg>
<div class="t f" style="left:268px;top:378.19px;font-size:16.32px;line-height:16.32px;color:#000;transform:scaleX(1.0448);transform-origin:0 0;">Heizung</div>
<svg class="a" style="left:245px;top:408px;" width="13" height="17"><use href="#fold"/></svg>
<div class="t f" style="left:268px;top:408.19px;font-size:16.32px;line-height:16.32px;color:#000;transform:scaleX(1.0351);transform-origin:0 0;">inst. Programme</div>
<svg class="a" style="left:242px;top:436px;" width="20" height="20" viewBox="0 0 20 20"><path d="M1 12.5L5.5 10.5H19L9 15Z" fill="#e2e2e4"/><path d="M9 15L19 10.5V16L9 19Z" fill="#c6c6c8"/><path d="M1 12.5L9 15V19L1 16.5Z" fill="#262626"/><circle cx="7.5" cy="17" r=".9" fill="#2c2"/><circle cx="13" cy="6.7" r="5.4" fill="#dfe5e7" stroke="#9c9c9c" stroke-width=".9"/><rect x="11.6" y="5.3" width="2.8" height="2.8" fill="#fff" stroke="#aaa" stroke-width=".7"/></svg>
<div class="t f" style="left:268px;top:438.19px;font-size:16.32px;line-height:16.32px;color:#000;transform:scaleX(1.0450);transform-origin:0 0;">Musik</div>
<svg class="a" style="left:245px;top:468px;" width="13" height="17"><use href="#fold"/></svg>
<div class="t f" style="left:268px;top:468.19px;font-size:16.32px;line-height:16.32px;color:#000;transform:scaleX(1.0797);transform-origin:0 0;">Nightly 64</div>
<svg class="a" style="left:245px;top:498px;" width="13" height="17"><use href="#fold"/></svg>
<div class="t f" style="left:268px;top:498.19px;font-size:16.32px;line-height:16.32px;color:#000;transform:scaleX(1.0849);transform-origin:0 0;">Nightly Neu</div>
<svg class="a" style="left:245px;top:528px;" width="13" height="17"><use href="#fold"/></svg>
<div class="t f" style="left:268px;top:528.19px;font-size:16.32px;line-height:16.32px;color:#000;transform:scaleX(1.0402);transform-origin:0 0;">PortableGoogleChrome</div>
<svg class="a" style="left:245px;top:558px;" width="13" height="17"><use href="#fold"/></svg>
<div class="t f" style="left:268px;top:558.19px;font-size:16.32px;line-height:16.32px;color:#000;transform:scaleX(0.9862);transform-origin:0 0;">Prozess Explorer</div>
<svg class="a" style="left:245px;top:588px;" width="13" height="17"><use href="#fold"/></svg>
<div class="t f" style="left:268px;top:588.19px;font-size:16.32px;line-height:16.32px;color:#000;transform:scaleX(1.0152);transform-origin:0 0;">Registry Sicherungen</div>
<svg class="a" style="left:245px;top:618px;" width="13" height="17"><use href="#fold"/></svg>
<div class="t f" style="left:268px;top:618.19px;font-size:16.32px;line-height:16.32px;color:#000;transform:scaleX(1.0169);transform-origin:0 0;">Sicherung</div>
<svg class="a" style="left:245px;top:648px;" width="13" height="17"><use href="#fold"/></svg>
<div class="t f" style="left:268px;top:648.19px;font-size:16.32px;line-height:16.32px;color:#000;transform:scaleX(1.0558);transform-origin:0 0;">smplayer-portable</div>
<svg class="a" style="left:245px;top:678px;" width="13" height="17"><use href="#fold"/></svg>
<div class="t f" style="left:268px;top:678.19px;font-size:16.32px;line-height:16.32px;color:#000;transform:scaleX(0.9694);transform-origin:0 0;">Speccy</div>
<svg class="a" style="left:245px;top:708px;" width="13" height="17"><use href="#fold"/></svg>
<div class="t f" style="left:268px;top:708.19px;font-size:16.32px;line-height:16.32px;color:#000;transform:scaleX(1.0318);transform-origin:0 0;">Tablet Codes</div>
<svg class="a" style="left:245px;top:738px;" width="13" height="17"><use href="#fold"/></svg>
<div class="t f" style="left:268px;top:738.19px;font-size:16.32px;line-height:16.32px;color:#000;transform:scaleX(1.0914);transform-origin:0 0;">Tchibo Mobil</div>
<svg class="a" style="left:245px;top:768px;" width="13" height="17"><use href="#fold"/></svg>
<div class="t f" style="left:268px;top:768.19px;font-size:16.32px;line-height:16.32px;color:#000;transform:scaleX(1.0502);transform-origin:0 0;">Telefonrechnungen</div>
<svg class="a" style="left:245px;top:798px;" width="13" height="17"><use href="#fold"/></svg>
<div class="t f" style="left:268px;top:798.19px;font-size:16.32px;line-height:16.32px;color:#000;transform:scaleX(1.0378);transform-origin:0 0;">Test</div>
<svg class="a" style="left:255px;top:828px;" width="13" height="17"><use href="#fold"/></svg>
<div class="t f" style="left:278px;top:828.19px;font-size:16.32px;line-height:16.32px;color:#000;transform:scaleX(1.0713);transform-origin:0 0;">firefox</div>
<svg class="a" style="left:255px;top:858px;" width="13" height="17"><use href="#fold"/></svg>
<div class="t f" style="left:278px;top:858.19px;font-size:16.32px;line-height:16.32px;color:#000;transform:scaleX(1.0619);transform-origin:0 0;">Profilordner</div>
<svg class="a" style="left:265px;top:888px;" width="13" height="17"><use href="#fold"/></svg>
<div class="t f" style="left:287px;top:888.19px;font-size:16.32px;line-height:16.32px;color:#000;transform:scaleX(1.0341);transform-origin:0 0;">bookmarkbackups</div>
<svg class="a" style="left:265px;top:918px;" width="13" height="17"><use href="#fold"/></svg>
<div class="t f" style="left:287px;top:918.19px;font-size:16.32px;line-height:16.32px;color:#000;transform:scaleX(1.0500);transform-origin:0 0;">browser-extension-data</div>
<svg class="a" style="left:265px;top:948px;" width="13" height="17"><use href="#fold"/></svg>
<div class="t f" style="left:287px;top:948.19px;font-size:16.32px;line-height:16.32px;color:#000;transform:scaleX(0.9901);transform-origin:0 0;">cache2</div>
<svg class="a" style="left:265px;top:978px;" width="13" height="17"><use href="#fold"/></svg>
<div class="t f" style="left:287px;top:978.19px;font-size:16.32px;line-height:16.32px;color:#000;transform:scaleX(1.0456);transform-origin:0 0;">chrome</div>
<div class="a" style="left:511px;top:131px;width:19px;height:873px;background:#f0f0f0;"></div>
<div class="a" style="left:511px;top:415px;width:19px;height:282px;background:#cdcdcd;"></div>
<svg class="a" style="left:516px;top:139px;" width="10" height="6" viewBox="0 0 10 6"><path d="M.5 5.5L5 1L9.5 5.5" fill="none" stroke="#606060" stroke-width="1.6"/></svg>
<svg class="a" style="left:516px;top:990px;" width="10" height="6" viewBox="0 0 10 6"><path d="M.5 .5L5 5L9.5 .5" fill="none" stroke="#606060" stroke-width="1.6"/></svg>
<div class="a" style="left:533px;top:131px;width:1px;height:873px;background:#f4f4f4;"></div>
<div class="a" style="left:550px;top:141px;width:16px;height:16px;border:1px solid #333"></div>
<svg class="a" style="left:707px;top:132px;" width="11" height="6" viewBox="0 0 11 6"><path d="M.5 5.5L5.5 .7L10.5 5.5" fill="none" stroke="#888" stroke-width="1"/></svg>
<div class="t f" style="left:585px;top:141.19px;font-size:16.32px;line-height:16.32px;color:#4c607a;transform:scaleX(1.0423);transform-origin:0 0;">Name</div>
<div class="t f" style="left:883px;top:141.19px;font-size:16.32px;line-height:16.32px;color:#4c607a;transform:scaleX(1.0497);transform-origin:0 0;">Änderungsdatum</div>
<div class="t f" style="left:1033px;top:141.19px;font-size:16.32px;line-height:16.32px;color:#4c607a;transform:scaleX(1.0325);transform-origin:0 0;">Typ</div>
<div class="t f" style="left:1183px;top:141.19px;font-size:16.32px;line-height:16.32px;color:#4c607a;transform:scaleX(1.0094);transform-origin:0 0;">Größe</div>
<div class="a" style="left:875px;top:131px;width:1px;height:35px;background:#e5e5e5;"></div>
<div class="a" style="left:1025px;top:131px;width:1px;height:35px;background:#e5e5e5;"></div>
<div class="a" style="left:1175px;top:131px;width:1px;height:35px;background:#e5e5e5;"></div>
<div class="a" style="left:1275px;top:131px;width:1px;height:35px;background:#e5e5e5;"></div>
<div class="a" style="left:534px;top:166px;width:1018px;height:838px;overflow:hidden">
<svg class="a" style="left:47px;top:14px" width="13" height="17"><use href="#fold"/></svg>
<div class="t f" style="left:69px;top:15.19px;font-size:16.32px;line-height:16.32px;color:#000;transform:scaleX(0.8670);transform-origin:0 0;">CSS</div>
<div class="t f" style="left:349px;top:15.51px;font-size:15.94px;line-height:15.94px;color:#666;transform:scaleX(1.0144);transform-origin:0 0;">24.05.2020 13:27</div>
<div class="t f" style="left:499px;top:15.19px;font-size:16.32px;line-height:16.32px;color:#666;transform:scaleX(1.0605);transform-origin:0 0;">Dateiordner</div>
<svg class="a" style="left:47px;top:41px" width="13" height="17"><use href="#fold"/></svg>
<div class="t f" style="left:69px;top:42.19px;font-size:16.32px;line-height:16.32px;color:#000;transform:scaleX(0.9654);transform-origin:0 0;">CSSWeb</div>
<div class="t f" style="left:349px;top:42.51px;font-size:15.94px;line-height:15.94px;color:#666;transform:scaleX(1.0241);transform-origin:0 0;">23.03.2020 11:07</div>
<div class="t f" style="left:499px;top:42.19px;font-size:16.32px;line-height:16.32px;color:#666;transform:scaleX(1.0605);transform-origin:0 0;">Dateiordner</div>
<svg class="a" style="left:47px;top:68px" width="13" height="17"><use href="#fold"/></svg>
<div class="t f" style="left:69px;top:69.19px;font-size:16.32px;line-height:16.32px;color:#000;transform:scaleX(1.0008);transform-origin:0 0;">Icons</div>
<div class="t f" style="left:349px;top:69.51px;font-size:15.94px;line-height:15.94px;color:#666;transform:scaleX(1.0144);transform-origin:0 0;">27.07.2020 13:32</div>
<div class="t f" style="left:499px;top:69.19px;font-size:16.32px;line-height:16.32px;color:#666;transform:scaleX(1.0605);transform-origin:0 0;">Dateiordner</div>
<svg class="a" style="left:47px;top:95px" width="13" height="17"><use href="#fold"/></svg>
<div class="t f" style="left:69px;top:96.19px;font-size:16.32px;line-height:16.32px;color:#000;transform:scaleX(1.0436);transform-origin:0 0;">image</div>
<div class="t f" style="left:349px;top:96.51px;font-size:15.94px;line-height:15.94px;color:#666;transform:scaleX(1.0241);transform-origin:0 0;">23.03.2020 11:07</div>
<div class="t f" style="left:499px;top:96.19px;font-size:16.32px;line-height:16.32px;color:#666;transform:scaleX(1.0605);transform-origin:0 0;">Dateiordner</div>
<svg class="a" style="left:44px;top:120px" width="19" height="20"><use href="#js"/></svg>
<div class="t f" style="left:69px;top:123.19px;font-size:16.32px;line-height:16.32px;color:#000;transform:scaleX(1.0445);transform-origin:0 0;">aboutconfig.uc.js</div>
<div class="t f" style="left:349px;top:123.51px;font-size:15.94px;line-height:15.94px;color:#666;transform:scaleX(1.0144);transform-origin:0 0;">24.09.2019 21:54</div>
<div class="t f" style="left:499px;top:123.19px;font-size:16.32px;line-height:16.32px;color:#666;transform:scaleX(0.9983);transform-origin:0 0;">JS-Datei</div>
<div class="t f" style="left:699.32px;top:123.35px;font-size:16.13px;line-height:16.13px;color:#666;transform:scaleX(0.9641);transform-origin:0 0;">2 KB</div>
<svg class="a" style="left:44px;top:147px" width="19" height="20"><use href="#js"/></svg>
<div class="t f" style="left:69px;top:150.19px;font-size:16.32px;line-height:16.32px;color:#000;transform:scaleX(0.9933);transform-origin:0 0;">Acceskey weg.uc.js</div>
<div class="t f" style="left:349px;top:150.51px;font-size:15.94px;line-height:15.94px;color:#666;transform:scaleX(1.0144);transform-origin:0 0;">12.03.2019 18:03</div>
<div class="t f" style="left:499px;top:150.19px;font-size:16.32px;line-height:16.32px;color:#666;transform:scaleX(0.9983);transform-origin:0 0;">JS-Datei</div>
<div class="t f" style="left:699.32px;top:150.35px;font-size:16.13px;line-height:16.13px;color:#666;transform:scaleX(0.9641);transform-origin:0 0;">1 KB</div>
<svg class="a" style="left:44px;top:174px" width="19" height="20"><use href="#js"/></svg>
<div class="t f" style="left:69px;top:177.19px;font-size:16.32px;line-height:16.32px;color:#000;transform:scaleX(1.0306);transform-origin:0 0;">Add-on Leiste neu.uc.js</div>
<div class="t f" style="left:349px;top:177.51px;font-size:15.94px;line-height:15.94px;color:#666;transform:scaleX(1.0144);transform-origin:0 0;">07.01.2020 18:07</div>
<div class="t f" style="left:499px;top:177.19px;font-size:16.32px;line-height:16.32px;color:#666;transform:scaleX(0.9983);transform-origin:0 0;">JS-Datei</div>
<div class="t f" style="left:699.32px;top:177.35px;font-size:16.13px;line-height:16.13px;color:#666;transform:scaleX(0.9641);transform-origin:0 0;">1 KB</div>
<svg class="a" style="left:44px;top:201px" width="19" height="20"><use href="#js"/></svg>
<div class="t f" style="left:69px;top:204.19px;font-size:16.32px;line-height:16.32px;color:#000;transform:scaleX(1.0385);transform-origin:0 0;">Add-ons Update.uc.js</div>
<div class="t f" style="left:349px;top:204.51px;font-size:15.94px;line-height:15.94px;color:#666;transform:scaleX(1.0144);transform-origin:0 0;">07.01.2020 19:51</div>
<div class="t f" style="left:499px;top:204.19px;font-size:16.32px;line-height:16.32px;color:#666;transform:scaleX(0.9983);transform-origin:0 0;">JS-Datei</div>
<div class="t f" style="left:699.32px;top:204.35px;font-size:16.13px;line-height:16.13px;color:#666;transform:scaleX(0.9641);transform-origin:0 0;">3 KB</div>
<svg class="a" style="left:47px;top:229px" width="14" height="18"><use href="#blank"/></svg>
<div class="t f" style="left:69px;top:231.19px;font-size:16.32px;line-height:16.32px;color:#000;transform:scaleX(1.0530);transform-origin:0 0;">Auto reload.uc.js111</div>
<div class="t f" style="left:349px;top:231.51px;font-size:15.94px;line-height:15.94px;color:#666;transform:scaleX(1.0241);transform-origin:0 0;">11.07.2020 19:10</div>
<div class="t f" style="left:499px;top:231.19px;font-size:16.32px;line-height:16.32px;color:#666;transform:scaleX(1.0336);transform-origin:0 0;">JS111-Datei</div>
<div class="t f" style="left:699.32px;top:231.35px;font-size:16.13px;line-height:16.13px;color:#666;transform:scaleX(0.9641);transform-origin:0 0;">3 KB</div>
<svg class="a" style="left:44px;top:255px" width="19" height="20"><use href="#js"/></svg>
<div class="t f" style="left:69px;top:258.19px;font-size:16.32px;line-height:16.32px;color:#000;transform:scaleX(0.9918);transform-origin:0 0;">BackToTheFavicon.uc.js</div>
<div class="t f" style="left:349px;top:258.51px;font-size:15.94px;line-height:15.94px;color:#666;transform:scaleX(1.0144);transform-origin:0 0;">24.09.2019 21:56</div>
<div class="t f" style="left:499px;top:258.19px;font-size:16.32px;line-height:16.32px;color:#666;transform:scaleX(0.9983);transform-origin:0 0;">JS-Datei</div>
<div class="t f" style="left:699.32px;top:258.35px;font-size:16.13px;line-height:16.13px;color:#666;transform:scaleX(0.9641);transform-origin:0 0;">1 KB</div>
<svg class="a" style="left:44px;top:282px" width="19" height="20"><use href="#js"/></svg>
<div class="t f" style="left:69px;top:285.19px;font-size:16.32px;line-height:16.32px;color:#000;transform:scaleX(0.9882);transform-origin:0 0;">BrowserBackReload.uc.js</div>
<div class="t f" style="left:349px;top:285.51px;font-size:15.94px;line-height:15.94px;color:#666;transform:scaleX(1.0144);transform-origin:0 0;">24.09.2019 21:57</div>
<div class="t f" style="left:499px;top:285.19px;font-size:16.32px;line-height:16.32px;color:#666;transform:scaleX(0.9983);transform-origin:0 0;">JS-Datei</div>
<div class="t f" style="left:699.32px;top:285.35px;font-size:16.13px;line-height:16.13px;color:#666;transform:scaleX(0.9641);transform-origin:0 0;">1 KB</div>
<svg class="a" style="left:44px;top:309px" width="19" height="20"><use href="#js"/></svg>
<div class="t f" style="left:69px;top:312.19px;font-size:16.32px;line-height:16.32px;color:#000;transform:scaleX(1.0415);transform-origin:0 0;">browsertoolbox.uc.js</div>
<div class="t f" style="left:349px;top:312.51px;font-size:15.94px;line-height:15.94px;color:#666;transform:scaleX(1.0144);transform-origin:0 0;">24.09.2019 21:57</div>
<div class="t f" style="left:499px;top:312.19px;font-size:16.32px;line-height:16.32px;color:#666;transform:scaleX(0.9983);transform-origin:0 0;">JS-Datei</div>
<div class="t f" style="left:699.32px;top:312.35px;font-size:16.13px;line-height:16.13px;color:#666;transform:scaleX(0.9641);transform-origin:0 0;">2 KB</div>
<svg class="a" style="left:44px;top:336px" width="19" height="20"><use href="#js"/></svg>
<div class="t f" style="left:69px;top:339.19px;font-size:16.32px;line-height:16.32px;color:#000;transform:scaleX(1.0494);transform-origin:0 0;">chrome-ordner.uc.js</div>
<div class="t f" style="left:349px;top:339.51px;font-size:15.94px;line-height:15.94px;color:#666;transform:scaleX(1.0144);transform-origin:0 0;">24.09.2019 21:57</div>
<div class="t f" style="left:499px;top:339.19px;font-size:16.32px;line-height:16.32px;color:#666;transform:scaleX(0.9983);transform-origin:0 0;">JS-Datei</div>
<div class="t f" style="left:699.32px;top:339.35px;font-size:16.13px;line-height:16.13px;color:#666;transform:scaleX(0.9641);transform-origin:0 0;">2 KB</div>
<svg class="a" style="left:44px;top:363px" width="19" height="20"><use href="#js"/></svg>
<div class="t f" style="left:69px;top:366.19px;font-size:16.32px;line-height:16.32px;color:#000;transform:scaleX(1.0251);transform-origin:0 0;">Chronikmanager.uc.js</div>
<div class="t f" style="left:349px;top:366.51px;font-size:15.94px;line-height:15.94px;color:#666;transform:scaleX(1.0144);transform-origin:0 0;">24.09.2019 21:57</div>
<div class="t f" style="left:499px;top:366.19px;font-size:16.32px;line-height:16.32px;color:#666;transform:scaleX(0.9983);transform-origin:0 0;">JS-Datei</div>
<div class="t f" style="left:699.32px;top:366.35px;font-size:16.13px;line-height:16.13px;color:#666;transform:scaleX(0.9641);transform-origin:0 0;">3 KB</div>
<svg class="a" style="left:44px;top:390px" width="19" height="20"><use href="#js"/></svg>
<div class="t f" style="left:69px;top:393.19px;font-size:16.32px;line-height:16.32px;color:#000;transform:scaleX(0.9784);transform-origin:0 0;">Clear Search.uc.js</div>
<div class="t f" style="left:349px;top:393.51px;font-size:15.94px;line-height:15.94px;color:#666;transform:scaleX(1.0144);transform-origin:0 0;">07.01.2020 19:54</div>
<div class="t f" style="left:499px;top:393.19px;font-size:16.32px;line-height:16.32px;color:#666;transform:scaleX(0.9983);transform-origin:0 0;">JS-Datei</div>
<div class="t f" style="left:699.32px;top:393.35px;font-size:16.13px;line-height:16.13px;color:#666;transform:scaleX(0.9641);transform-origin:0 0;">2 KB</div>
<svg class="a" style="left:44px;top:417px" width="19" height="20"><use href="#js"/></svg>
<div class="t f" style="left:69px;top:420.19px;font-size:16.32px;line-height:16.32px;color:#000;transform:scaleX(1.0201);transform-origin:0 0;">ClearCacheButtonMovable.uc.js</div>
<div class="t f" style="left:349px;top:420.51px;font-size:15.94px;line-height:15.94px;color:#666;transform:scaleX(1.0144);transform-origin:0 0;">29.10.2019 10:45</div>
<div class="t f" style="left:499px;top:420.19px;font-size:16.32px;line-height:16.32px;color:#666;transform:scaleX(0.9983);transform-origin:0 0;">JS-Datei</div>
<div class="t f" style="left:699.32px;top:420.35px;font-size:16.13px;line-height:16.13px;color:#666;transform:scaleX(0.9641);transform-origin:0 0;">4 KB</div>
<svg class="a" style="left:44px;top:444px" width="19" height="20"><use href="#js"/></svg>
<div class="t f" style="left:69px;top:447.19px;font-size:16.32px;line-height:16.32px;color:#000;transform:scaleX(1.0081);transform-origin:0 0;">CSS Ordner öffnen.uc.js</div>
<div class="t f" style="left:349px;top:447.51px;font-size:15.94px;line-height:15.94px;color:#666;transform:scaleX(1.0144);transform-origin:0 0;">24.09.2019 21:58</div>
<div class="t f" style="left:499px;top:447.19px;font-size:16.32px;line-height:16.32px;color:#666;transform:scaleX(0.9983);transform-origin:0 0;">JS-Datei</div>
<div class="t f" style="left:699.32px;top:447.35px;font-size:16.13px;line-height:16.13px;color:#666;transform:scaleX(0.9641);transform-origin:0 0;">2 KB</div>
<svg class="a" style="left:44px;top:471px" width="19" height="20"><use href="#js"/></svg>
<div class="t f" style="left:69px;top:474.19px;font-size:16.32px;line-height:16.32px;color:#000;transform:scaleX(1.0042);transform-origin:0 0;">CSSWeb Ordner.uc.js</div>
<div class="t f" style="left:349px;top:474.51px;font-size:15.94px;line-height:15.94px;color:#666;transform:scaleX(1.0144);transform-origin:0 0;">24.09.2019 21:58</div>
<div class="t f" style="left:499px;top:474.19px;font-size:16.32px;line-height:16.32px;color:#666;transform:scaleX(0.9983);transform-origin:0 0;">JS-Datei</div>
<div class="t f" style="left:699.32px;top:474.35px;font-size:16.13px;line-height:16.13px;color:#666;transform:scaleX(0.9641);transform-origin:0 0;">2 KB</div>
<svg class="a" style="left:44px;top:498px" width="19" height="20"><use href="#js"/></svg>
<div class="t f" style="left:69px;top:501.19px;font-size:16.32px;line-height:16.32px;color:#000;transform:scaleX(1.0080);transform-origin:0 0;">Dblclick_ReloadTab.uc.js</div>
<div class="t f" style="left:349px;top:501.51px;font-size:15.94px;line-height:15.94px;color:#666;transform:scaleX(1.0144);transform-origin:0 0;">03.09.2019 16:18</div>
<div class="t f" style="left:499px;top:501.19px;font-size:16.32px;line-height:16.32px;color:#666;transform:scaleX(0.9983);transform-origin:0 0;">JS-Datei</div>
<div class="t f" style="left:699.32px;top:501.35px;font-size:16.13px;line-height:16.13px;color:#666;transform:scaleX(0.9641);transform-origin:0 0;">1 KB</div>
<svg class="a" style="left:44px;top:525px" width="19" height="20"><use href="#js"/></svg>
<div class="t f" style="left:69px;top:528.19px;font-size:16.32px;line-height:16.32px;color:#000;transform:scaleX(1.0031);transform-origin:0 0;">extras_config_menu.uc.js</div>
<div class="t f" style="left:349px;top:528.51px;font-size:15.94px;line-height:15.94px;color:#666;transform:scaleX(1.0144);transform-origin:0 0;">28.12.2019 18:21</div>
<div class="t f" style="left:499px;top:528.19px;font-size:16.32px;line-height:16.32px;color:#666;transform:scaleX(0.9983);transform-origin:0 0;">JS-Datei</div>
<div class="t f" style="left:690.15px;top:528.35px;font-size:16.13px;line-height:16.13px;color:#666;transform:scaleX(0.9764);transform-origin:0 0;">22 KB</div>
<svg class="a" style="left:44px;top:552px" width="19" height="20"><use href="#js"/></svg>
<div class="t f" style="left:69px;top:555.19px;font-size:16.32px;line-height:16.32px;color:#000;transform:scaleX(1.0350);transform-origin:0 0;">Open with.uc.js</div>
<div class="t f" style="left:349px;top:555.51px;font-size:15.94px;line-height:15.94px;color:#666;transform:scaleX(1.0144);transform-origin:0 0;">28.10.2019 12:58</div>
<div class="t f" style="left:499px;top:555.19px;font-size:16.32px;line-height:16.32px;color:#666;transform:scaleX(0.9983);transform-origin:0 0;">JS-Datei</div>
<div class="t f" style="left:699.32px;top:555.35px;font-size:16.13px;line-height:16.13px;color:#666;transform:scaleX(0.9641);transform-origin:0 0;">5 KB</div>
<svg class="a" style="left:44px;top:579px" width="19" height="20"><use href="#js"/></svg>
<div class="t f" style="left:69px;top:582.19px;font-size:16.32px;line-height:16.32px;color:#000;transform:scaleX(1.0426);transform-origin:0 0;">Profilordner.uc.js</div>
<div class="t f" style="left:349px;top:582.51px;font-size:15.94px;line-height:15.94px;color:#666;transform:scaleX(1.0144);transform-origin:0 0;">13.01.2020 17:19</div>
<div class="t f" style="left:499px;top:582.19px;font-size:16.32px;line-height:16.32px;color:#666;transform:scaleX(0.9983);transform-origin:0 0;">JS-Datei</div>
<div class="t f" style="left:699.32px;top:582.35px;font-size:16.13px;line-height:16.13px;color:#666;transform:scaleX(0.9641);transform-origin:0 0;">2 KB</div>
<svg class="a" style="left:44px;top:606px" width="19" height="20"><use href="#js"/></svg>
<div class="t f" style="left:69px;top:609.19px;font-size:16.32px;line-height:16.32px;color:#000;transform:scaleX(1.0273);transform-origin:0 0;">RestartFirefoxButtonM.uc.js</div>
<div class="t f" style="left:349px;top:609.51px;font-size:15.94px;line-height:15.94px;color:#666;transform:scaleX(1.0144);transform-origin:0 0;">24.09.2019 21:59</div>
<div class="t f" style="left:499px;top:609.19px;font-size:16.32px;line-height:16.32px;color:#666;transform:scaleX(0.9983);transform-origin:0 0;">JS-Datei</div>
<div class="t f" style="left:699.32px;top:609.35px;font-size:16.13px;line-height:16.13px;color:#666;transform:scaleX(0.9641);transform-origin:0 0;">7 KB</div>
<svg class="a" style="left:44px;top:633px" width="19" height="20"><use href="#js"/></svg>
<div class="t f" style="left:69px;top:636.19px;font-size:16.32px;line-height:16.32px;color:#000;transform:scaleX(1.0161);transform-origin:0 0;">Script Test.uc.js</div>
<div class="t f" style="left:349px;top:636.51px;font-size:15.94px;line-height:15.94px;color:#666;transform:scaleX(1.0144);transform-origin:0 0;">24.09.2019 21:59</div>
<div class="t f" style="left:499px;top:636.19px;font-size:16.32px;line-height:16.32px;color:#666;transform:scaleX(0.9983);transform-origin:0 0;">JS-Datei</div>
<div class="t f" style="left:699.32px;top:636.35px;font-size:16.13px;line-height:16.13px;color:#666;transform:scaleX(0.9641);transform-origin:0 0;">3 KB</div>
<svg class="a" style="left:44px;top:660px" width="19" height="20"><use href="#js"/></svg>
<div class="t f" style="left:69px;top:663.19px;font-size:16.32px;line-height:16.32px;color:#000;transform:scaleX(1.0376);transform-origin:0 0;">Scripte Downloaden und Installie...</div>
<div class="t f" style="left:349px;top:663.51px;font-size:15.94px;line-height:15.94px;color:#666;transform:scaleX(1.0241);transform-origin:0 0;">11.09.2019 10:06</div>
<div class="t f" style="left:499px;top:663.19px;font-size:16.32px;line-height:16.32px;color:#666;transform:scaleX(0.9983);transform-origin:0 0;">JS-Datei</div>
<div class="t f" style="left:699.32px;top:663.35px;font-size:16.13px;line-height:16.13px;color:#666;transform:scaleX(0.9641);transform-origin:0 0;">4 KB</div>
<svg class="a" style="left:44px;top:687px" width="19" height="20"><use href="#js"/></svg>
<div class="t f" style="left:69px;top:690.19px;font-size:16.32px;line-height:16.32px;color:#000;transform:scaleX(1.0459);transform-origin:0 0;">Seiteninformationen  Medien.uc.js</div>
<div class="t f" style="left:349px;top:690.51px;font-size:15.94px;line-height:15.94px;color:#666;transform:scaleX(1.0144);transform-origin:0 0;">13.08.2020 19:31</div>
<div class="t f" style="left:499px;top:690.19px;font-size:16.32px;line-height:16.32px;color:#666;transform:scaleX(0.9983);transform-origin:0 0;">JS-Datei</div>
<div class="t f" style="left:699.32px;top:690.35px;font-size:16.13px;line-height:16.13px;color:#666;transform:scaleX(0.9641);transform-origin:0 0;">2 KB</div>
<svg class="a" style="left:44px;top:714px" width="19" height="20"><use href="#js"/></svg>
<div class="t f" style="left:69px;top:717.19px;font-size:16.32px;line-height:16.32px;color:#000;transform:scaleX(1.0283);transform-origin:0 0;">setTimeout.uc.js</div>
<div class="t f" style="left:349px;top:717.51px;font-size:15.94px;line-height:15.94px;color:#666;transform:scaleX(1.0144);transform-origin:0 0;">23.03.2019 10:32</div>
<div class="t f" style="left:499px;top:717.19px;font-size:16.32px;line-height:16.32px;color:#666;transform:scaleX(0.9983);transform-origin:0 0;">JS-Datei</div>
<div class="t f" style="left:699.32px;top:717.35px;font-size:16.13px;line-height:16.13px;color:#666;transform:scaleX(0.9641);transform-origin:0 0;">1 KB</div>
<svg class="a" style="left:44px;top:741px" width="19" height="20"><use href="#js"/></svg>
<div class="t f" style="left:69px;top:744.19px;font-size:16.32px;line-height:16.32px;color:#000;transform:scaleX(0.9883);transform-origin:0 0;">TabFocus.uc.js</div>
<div class="t f" style="left:349px;top:744.51px;font-size:15.94px;line-height:15.94px;color:#666;transform:scaleX(1.0144);transform-origin:0 0;">02.06.2019 09:59</div>
<div class="t f" style="left:499px;top:744.19px;font-size:16.32px;line-height:16.32px;color:#666;transform:scaleX(0.9983);transform-origin:0 0;">JS-Datei</div>
<div class="t f" style="left:699.32px;top:744.35px;font-size:16.13px;line-height:16.13px;color:#666;transform:scaleX(0.9641);transform-origin:0 0;">1 KB</div>
<svg class="a" style="left:44px;top:768px" width="19" height="20"><use href="#js"/></svg>
<div class="t f" style="left:69px;top:771.19px;font-size:16.32px;line-height:16.32px;color:#000;transform:scaleX(1.0265);transform-origin:0 0;">Test css Datei direkt aufrufen.uc.js</div>
<div class="t f" style="left:349px;top:771.51px;font-size:15.94px;line-height:15.94px;color:#666;transform:scaleX(1.0144);transform-origin:0 0;">24.09.2019 21:59</div>
<div class="t f" style="left:499px;top:771.19px;font-size:16.32px;line-height:16.32px;color:#666;transform:scaleX(0.9983);transform-origin:0 0;">JS-Datei</div>
<div class="t f" style="left:699.32px;top:771.35px;font-size:16.13px;line-height:16.13px;color:#666;transform:scaleX(0.9641);transform-origin:0 0;">2 KB</div>
<svg class="a" style="left:44px;top:795px" width="19" height="20"><use href="#js"/></svg>
<div class="t f" style="left:69px;top:798.19px;font-size:16.32px;line-height:16.32px;color:#000;transform:scaleX(1.0027);transform-origin:0 0;">Test.uc.js</div>
<div class="t f" style="left:349px;top:798.51px;font-size:15.94px;line-height:15.94px;color:#666;transform:scaleX(1.0241);transform-origin:0 0;">26.09.2020 15:11</div>
<div class="t f" style="left:499px;top:798.19px;font-size:16.32px;line-height:16.32px;color:#666;transform:scaleX(0.9983);transform-origin:0 0;">JS-Datei</div>
<div class="t f" style="left:699.32px;top:798.35px;font-size:16.13px;line-height:16.13px;color:#666;transform:scaleX(0.9641);transform-origin:0 0;">0 KB</div>
<svg class="a" style="left:44px;top:822px" width="19" height="20"><use href="#js"/></svg>
<div class="t f" style="left:69px;top:825.19px;font-size:16.32px;line-height:16.32px;color:#000;transform:scaleX(1.0184);transform-origin:0 0;">Uhr.uc.js</div>
<div class="t f" style="left:349px;top:825.51px;font-size:15.94px;line-height:15.94px;color:#666;transform:scaleX(1.0144);transform-origin:0 0;">27.01.2020 15:59</div>
<div class="t f" style="left:499px;top:825.19px;font-size:16.32px;line-height:16.32px;color:#666;transform:scaleX(0.9983);transform-origin:0 0;">JS-Datei</div>
<div class="t f" style="left:699.32px;top:825.35px;font-size:16.13px;line-height:16.13px;color:#666;transform:scaleX(0.9641);transform-origin:0 0;">3 KB</div>
</div>
<div class="a" style="left:1552px;top:131px;width:20px;height:873px;background:#f0f0f0;"></div>
<div class="a" style="left:1553px;top:152px;width:18px;height:637px;background:#cdcdcd;"></div>
<svg class="a" style="left:1557px;top:139px;" width="10" height="6" viewBox="0 0 10 6"><path d="M.5 5.5L5 1L9.5 5.5" fill="none" stroke="#606060" stroke-width="1.6"/></svg>
<svg class="a" style="left:1557px;top:990px;" width="10" height="6" viewBox="0 0 10 6"><path d="M.5 .5L5 5L9.5 .5" fill="none" stroke="#606060" stroke-width="1.6"/></svg>
<div class="t f" style="left:209px;top:1012.40px;font-size:14.88px;line-height:14.88px;color:#1e395b;transform:scaleX(0.9936);transform-origin:0 0;">40 Elemente</div>
<div class="a" style="left:303px;top:1011px;width:1px;height:15px;background:#ececec;"></div>
<div class="a" style="left:1511px;top:1004px;width:28px;height:29px;border:1px solid #1a9be0;background:#cce8f6"></div>
<svg class="a" style="left:1517px;top:1011px;" width="17" height="16" viewBox="0 0 17 16"><rect x=".5" y=".5" width="5" height="15" fill="#fff" stroke="#999"/><rect x="2" y="2" width="2" height="2" fill="#48c"/><rect x="2" y="7" width="2" height="2" fill="#4a4"/><rect x="2" y="12" width="2" height="2" fill="#c33"/><path d="M7 3H17M7 8H17M7 13H17" stroke="#777" stroke-width="1" stroke-dasharray="4 2"/></svg>
<svg class="a" style="left:1544px;top:1011px;" width="18" height="14" viewBox="0 0 18 14"><rect x=".5" y=".5" width="17" height="13" fill="#fff" stroke="#999"/><rect x="2" y="2" width="14" height="10" fill="#5a9ee0"/><path d="M2 9Q6 4 10 7T16 9V12H2Z" fill="#3a7a4a"/><path d="M2 10H16V12H2Z" fill="#4a8ad0"/></svg>
</body></html>
